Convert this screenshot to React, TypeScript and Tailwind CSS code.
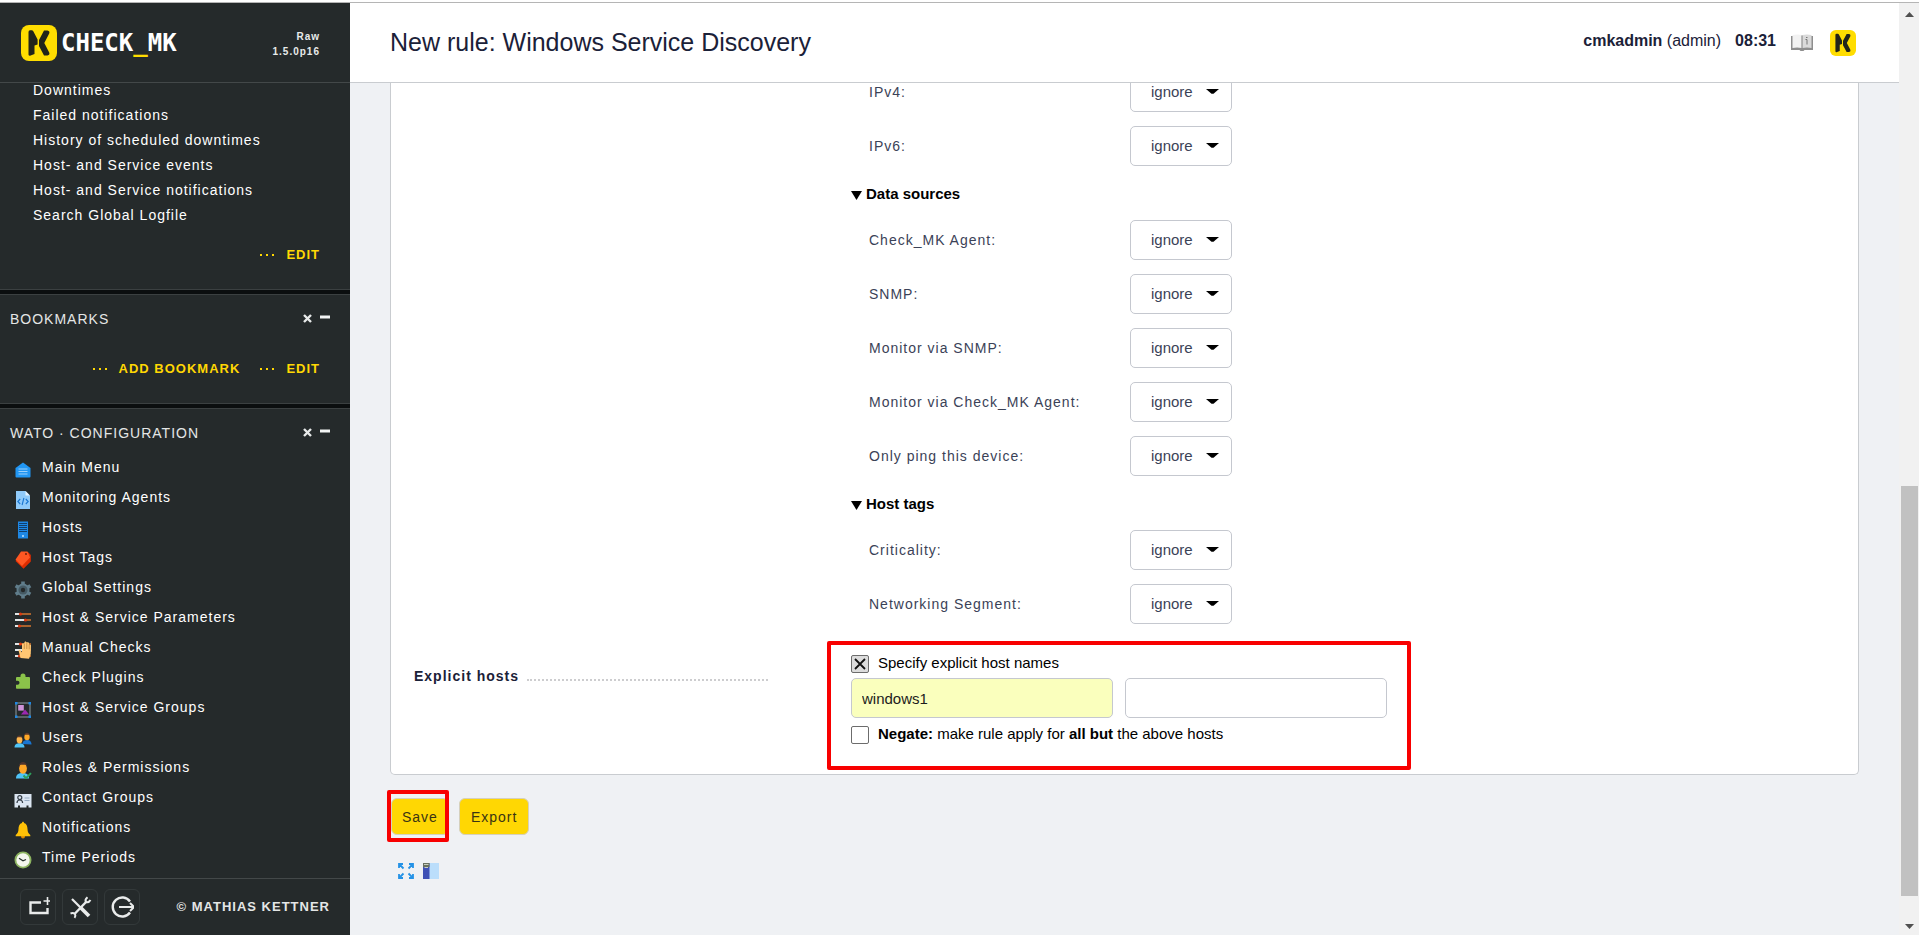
import type { ReactNode } from "react";

const sans = "font-['Liberation_Sans',Arial,sans-serif]";

const views = [
  "Downtimes",
  "Failed notifications",
  "History of scheduled downtimes",
  "Host- and Service events",
  "Host- and Service notifications",
  "Search Global Logfile",
];

const Sliders = () => (
  <g>
    <path d="M1 3h5M1 9h10M1 15h4" stroke="#e0e4e6" strokeWidth="2" />
    <path d="M7 3h10M12 9h5M6 15h11" stroke="#d2762f" strokeWidth="1.6" />
    <circle cx="6.5" cy="3" r="1.6" fill="#dd3a12" />
    <circle cx="11.5" cy="9" r="1.6" fill="#dd3a12" />
    <circle cx="5.5" cy="15" r="1.6" fill="#dd3a12" />
  </g>
);

const menu: { label: string; icon: ReactNode }[] = [
  {
    label: "Main Menu",
    icon: (
      <g>
        <path d="M9 1.5 16.5 7v8.5a1 1 0 0 1-1 1h-13a1 1 0 0 1-1-1V7z" fill="#2196f3" />
        <path d="M4.5 8h9M4.5 10.5h9M4.5 13h9" stroke="#9bd0fb" strokeWidth="1.2" />
      </g>
    ),
  },
  {
    label: "Monitoring Agents",
    icon: (
      <g>
        <path d="M2 0h9.5L16 4.5V18H2z" fill="#90caf9" />
        <path d="M11.500 0 16 4.500h-4.500z" fill="#e6f3fe" />
        <path d="M6.200 8 3.800 10.500l2.400 2.500M11.800 8l2.400 2.500-2.400 2.500M9.900 7l-1.800 7" stroke="#1976d2" strokeWidth="1.1" fill="none" />
      </g>
    ),
  },
  {
    label: "Hosts",
    icon: (
      <g>
        <rect x="4" y="0.500" width="10" height="17" fill="#1e88e5" />
        <path d="M5 2.500h8M5 4.500h8M5 6.500h8M5 8.500h8M5 10.500h8" stroke="#123f6b" strokeWidth="1" />
        <circle cx="9" cy="15" r="1" fill="#bfe3ff" />
      </g>
    ),
  },
  {
    label: "Host Tags",
    icon: (
      <g>
        <path d="M8 1h6L16.800 4v6.500L9.500 17.800 1.500 10z" fill="#dd2c00" />
        <path d="M7 .5h6.500L16 6.500 8 15 1.500 8.500z" fill="#ff5722" />
        <circle cx="12" cy="3" r="0.900" fill="#5c1a08" />
      </g>
    ),
  },
  {
    label: "Global Settings",
    icon: (
      <g>
        <circle cx="9" cy="9" r="6.500" fill="#607d8b" />
        <path d="M9 0.500v17M1.600 4.700l14.800 8.600M1.600 13.300l14.800-8.600" stroke="#607d8b" strokeWidth="3.600" />
        <circle cx="9" cy="9" r="4.600" fill="#455a64" />
        <circle cx="9" cy="9" r="2.200" fill="#252a2b" />
      </g>
    ),
  },
  { label: "Host & Service Parameters", icon: <Sliders /> },
  {
    label: "Manual Checks",
    icon: (
      <g>
        <Sliders />
        <path d="M6.500 17 4.500 9.500 6 8.500l2 3V3l1-1 1.200 1L10.500 1l1 -.8 1 1L13 1.500l1-.6 1 1.200v1.700l1-.3 1 .8-.2 8.700-1.800 4.700z" fill="#ffc773" />
        <path d="M10.300 3v5M12.800 2v6M15.200 3.500v4.800" stroke="#b97b33" strokeWidth=".7" />
      </g>
    ),
  },
  {
    label: "Check Plugins",
    icon: (
      <path
        d="M3 6h3.500V5a2.500 2.500 0 1 1 5 0v1H15a1 1 0 0 1 1 1v10a.8.8 0 0 1-.8.800H2.800A.8.8 0 0 1 2 17v-3.300h1.500a2 2 0 1 0 0-4H2V7a1 1 0 0 1 1-1z"
        fill="#8bc34a"
      />
    ),
  },
  {
    label: "Host & Service Groups",
    icon: (
      <g>
        <rect x="2" y="2" width="14" height="14" fill="none" stroke="#8d9aa0" strokeWidth="1" />
        <path d="M1 1h2.500v2.500H1zM14.500 1H17v2.500h-2.500zM1 14.500h2.500V17H1zM14.500 14.500H17V17h-2.500z" fill="#1e88e5" />
        <rect x="4.200" y="4" width="5.600" height="5.600" fill="#ce93d8" />
        <path d="M7 13.500 11 8.500l4.200 5z" fill="#9c27b0" />
      </g>
    ),
  },
  {
    label: "Users",
    icon: (
      <g>
        <path d="M8.500 13c0-3 2-4 4.500-4s4.500 1.200 4.500 4.500z" fill="#1976d2" />
        <ellipse cx="13" cy="6" rx="2.700" ry="3.200" fill="#ffa726" />
        <path d="M10 5.500c0-5 6-5 6 0l-.8-1.700h-4.400z" fill="#5d3a2c" />
        <path d="M.5 16.500c0-3.300 2-4.300 5-4.300s5 1 5 4.300z" fill="#4fc3f7" />
        <ellipse cx="5.500" cy="8.800" rx="2.900" ry="3.600" fill="#ffb74d" />
        <path d="M2.400 8.300c0-5.200 6.200-5.200 6.200 0l-.9-2H3.300z" fill="#5d3a2c" />
      </g>
    ),
  },
  {
    label: "Roles & Permissions",
    icon: (
      <g>
        <path d="M2 17.500c0-4 2.500-5.500 6.500-5.500s6.500 1.500 6.500 5.500z" fill="#4fc3f7" />
        <ellipse cx="9" cy="7.500" rx="3.900" ry="5.300" fill="#ffa726" />
        <path d="M4.700 7c-.5-8 9-8 8.600 0L12 3.800H6z" fill="#4e342e" />
        <path d="M9.500 14.500l2.500 2.600 5-5" stroke="#2e9e5b" strokeWidth="2" fill="none" />
      </g>
    ),
  },
  {
    label: "Contact Groups",
    icon: (
      <g>
        <path d="M.5 3h17v13.500h-3v-2h-2v2H6v-2H4v2H.5z" fill="#dce6f2" />
        <circle cx="5.800" cy="6.600" r="2" fill="none" stroke="#37404a" strokeWidth="1.200" />
        <path d="M3 12c0-4 5.600-4 5.600 0" fill="none" stroke="#37404a" strokeWidth="1.200" />
        <path d="M10.500 7h5M10.500 9.500h5" stroke="#94a9c0" strokeWidth="1" />
      </g>
    ),
  },
  {
    label: "Notifications",
    icon: (
      <g>
        <circle cx="9" cy="15.500" r="2" fill="#e08b00" />
        <path d="M9 .8c.8 0 1 .6 1 1.200 2.700.8 3.400 3 3.500 6 .1 3 .8 4.500 2.800 6v1.200H1.700V14c2-1.500 2.700-3 2.800-6 .1-3 .8-5.200 3.500-6 0-.6.200-1.200 1-1.200z" fill="#ffc107" />
      </g>
    ),
  },
  {
    label: "Time Periods",
    icon: (
      <g>
        <circle cx="9" cy="9" r="7.600" fill="#f4f6ee" stroke="#8cb360" strokeWidth="1.800" />
        <path d="M5 7.200l4 2.600 3-1.300" stroke="#26302a" strokeWidth="1.200" fill="none" />
      </g>
    ),
  },
];

const MkLogo = ({ className }: { className: string }) => (
  <svg viewBox="0 0 36 36" className={className} aria-hidden="true">
    <rect width="36" height="36" rx="8" fill="#ffdd00" />
    <path d="M7.500 7Q7.500 5.300 9 5.300h1.600q1.200 0 1.700 1L16.600 14.500v5l-3.100 1v8.500L9 30.800Q7.500 30.800 7.500 29.500z" fill="#22241a" />
    <path d="M23 5.500h3.500q2.600.6 1.700 3L23.300 18l4.900 9.500q.9 2.400-1.700 3H23L18 21v-6z" fill="#22241a" />
  </svg>
);

const SnapinHead = ({ title }: { title: string }) => (
  <div className="flex h-12 items-center justify-between border-t border-[#3b4041] pr-5 pl-2.5">
    <h2 className="text-sm tracking-[1px] text-[#e4e6e6]">{title}</h2>
    <div className="flex items-start gap-2">
      <button aria-label={`Remove ${title}`} className="block">
        <svg viewBox="0 0 9 9" className="size-[9px]">
          <path d="M1 1l7 7M8 1L1 8" stroke="#e8eaea" strokeWidth="2.400" />
        </svg>
      </button>
      <button aria-label={`Collapse ${title}`} className="block">
        <svg viewBox="0 0 10 9" className="h-[9px] w-2.5">
          <path d="M0 3h10" stroke="#f2f4f4" strokeWidth="3" />
        </svg>
      </button>
    </div>
  </div>
);

const FootLink = ({ children }: { children: string }) => (
  <a href="#" className="flex items-center gap-3 text-[13px] leading-4 font-bold tracking-[1px] text-[#ffd703]">
    <svg viewBox="0 0 14 2" className="h-0.5 w-3.5" aria-hidden="true">
      <path d="M0 0h2v2H0zM6 0h2v2H6zM12 0h2v2h-2z" fill="#ffd703" />
    </svg>
    {children}
  </a>
);

const FooterButton = ({ label, children }: { label: string; children: ReactNode }) => (
  <button aria-label={label} className="flex size-9 items-center justify-center rounded-md border border-[#33393a]">
    <svg viewBox="0 0 24 24" className="size-6" fill="none" stroke="#e9ebeb" strokeWidth="2">
      {children}
    </svg>
  </button>
);

function Sidebar() {
  return (
    <aside className="flex w-[350px] shrink-0 flex-col bg-[#252a2b] text-white">
      <div className="flex h-20 shrink-0 items-center justify-between border-b border-[#434849] pr-[30px] pl-[21px]">
        <a href="#" className="flex items-center gap-1">
          <MkLogo className="size-9" />
          <span className="font-['DejaVu_Sans_Mono',monospace] text-2xl font-bold">
            CHECK<span className="text-[#ffdd00]">_</span>MK
          </span>
        </a>
        <div className="pt-0.5 text-right text-[10px] leading-[15px] font-bold tracking-[1px] text-[#e8eaea]">
          Raw
          <br />
          1.5.0p16
        </div>
      </div>

      <div className="flex min-h-0 grow flex-col gap-1 overflow-hidden bg-[#0b0e0f]">
        <section className="shrink-0 border-b border-[#3b4041] bg-[#252a2b] pr-[30px] pb-[26px] pl-[33px]">
          <ul className="flex flex-col gap-2.5">
            {views.map((v) => (
              <li key={v} className="text-sm leading-[15px] tracking-[1px]">
                <a href="#">{v}</a>
              </li>
            ))}
          </ul>
          <div className="mt-6 flex justify-end">
            <FootLink>EDIT</FootLink>
          </div>
        </section>

        <section className="shrink-0 border-b border-[#3b4041] bg-[#252a2b]">
          <SnapinHead title="BOOKMARKS" />
          <div className="flex justify-end gap-5 pt-[19px] pr-[30px] pb-[26px]">
            <FootLink>ADD BOOKMARK</FootLink>
            <FootLink>EDIT</FootLink>
          </div>
        </section>

        <section className="grow bg-[#252a2b]">
          <SnapinHead title="WATO · CONFIGURATION" />
          <ul className="-mt-1">
            {menu.map((m) => (
              <li key={m.label}>
                <a href="#" className="flex h-[30px] gap-2.5 pl-3.5 text-sm leading-[30px] tracking-[1px]">
                  <svg viewBox="0 0 18 18" className="mt-[9px] size-[18px]" aria-hidden="true">
                    {m.icon}
                  </svg>
                  {m.label}
                </a>
              </li>
            ))}
          </ul>
        </section>
      </div>

      <footer className="flex h-[57px] shrink-0 items-center justify-between border-t border-[#434849] px-5">
        <div className="flex gap-1.5">
          <FooterButton label="Add snapin">
            <path d="M15 7.500H4.500v10.500h17v-5" strokeWidth="2.400" />
            <path d="M21.500 2v8M17.500 6h8" strokeWidth="1.600" />
          </FooterButton>
          <FooterButton label="Personal settings">
            <path d="M4 4l9 9" strokeWidth="2.200" />
            <path d="M13 13l8 8" strokeWidth="3.800" />
            <path d="M7 18.500L18.500 6.500" strokeWidth="2.400" />
            <path d="M19.500 2.200Q16.500 4.500 18 7q2.500 1.200 4.500-2M2.500 18.500q2.500-1 4.500.5 1 2-.5 3.800" strokeWidth="2" />
          </FooterButton>
          <FooterButton label="Logout">
            <path d="M20 6.500A9.500 9.500 0 1 0 20 17.500" strokeWidth="2.400" />
            <path d="M9 12h15M20 8l4 4-4 4" strokeWidth="2" />
          </FooterButton>
        </div>
        <a href="#" className="text-[13px] font-bold tracking-[1px] text-[#e4e6e6]">
          © MATHIAS KETTNER
        </a>
      </footer>
    </aside>
  );
}

const TagRow = ({ label }: { label: string }) => (
  <label className="flex items-center pl-[18px] text-sm text-[#3b4257]">
    <span className="w-[261px] tracking-[1px]">{label}:</span>
    <span className="relative">
      <select
        className="h-10 w-[102px] appearance-none rounded-[5px] border border-[#c5c8cf] bg-white pl-5 text-[15px] text-[#3b4257]"
        defaultValue="ignore"
      >
        <option>ignore</option>
      </select>
      <svg viewBox="0 0 13 5" className="pointer-events-none absolute top-[17px] right-[13px] h-[5px] w-[13px]" aria-hidden="true">
        <path d="M0 0h13L7.500 4.700h-2z" fill="#000" />
      </svg>
    </span>
  </label>
);

const GroupHead = ({ children }: { children: string }) => (
  <button className="-mb-0.5 flex h-7 items-center gap-1 text-[15px] font-bold text-black">
    <svg viewBox="0 0 11 9" className="mt-0.5 h-[9px] w-[11px]" aria-hidden="true">
      <path d="M0 0h11L5.500 9z" fill="#000" />
    </svg>
    {children}
  </button>
);

function RulePanel() {
  return (
    <div className="rounded-b-[5px] border border-t-0 border-[#c9ccd0] bg-white">
      <div className="grid grid-cols-[460px_1fr]">
        <div />
        <div className="-mt-[11px] flex flex-col gap-3.5">
          <TagRow label="IPv4" />
          <TagRow label="IPv6" />
          <GroupHead>Data sources</GroupHead>
          <TagRow label="Check_MK Agent" />
          <TagRow label="SNMP" />
          <TagRow label="Monitor via SNMP" />
          <TagRow label="Monitor via Check_MK Agent" />
          <TagRow label="Only ping this device" />
          <GroupHead>Host tags</GroupHead>
          <TagRow label="Criticality" />
          <TagRow label="Networking Segment" />
        </div>
      </div>

      <div className="mt-[29px] grid grid-cols-[460px_1fr] pb-7">
        <div className="mt-3.5 mr-[83px] flex h-[18px] items-center gap-2 pl-[23px]">
          <span className="text-sm font-bold tracking-[1px] text-[#1b2138]">Explicit hosts</span>
          <span className="mt-[7px] grow border-b-2 border-dotted border-[#cdcdcf]" />
        </div>
        <div className="relative w-[536px] text-[15px] text-black">
          <label className="flex h-[22px] items-center gap-[9px]">
            <span className="relative flex">
              <input
                type="checkbox"
                defaultChecked
                className="peer size-[18px] appearance-none rounded-[2px] border border-[#6c6c6c] bg-white checked:bg-[#dcdcdc]"
              />
              <svg viewBox="0 0 18 18" className="pointer-events-none absolute inset-0 hidden size-[18px] peer-checked:block" aria-hidden="true">
                <path d="M4 4l10 10M14 4L4 14" stroke="#111" strokeWidth="1.800" />
              </svg>
            </span>
            <span className="pb-0.5">Specify explicit host names</span>
          </label>
          <div className="mt-[3px] flex gap-3">
            <input
              aria-label="Host name 1"
              defaultValue="windows1"
              className="h-10 w-[262px] rounded-[5px] border border-[#c5c8cf] bg-[#faffbd] px-2.5 text-[15px] text-[#1c1c1c]"
            />
            <input
              aria-label="Host name 2"
              defaultValue=""
              className="h-10 w-[262px] rounded-[5px] border border-[#c5c8cf] bg-white px-2.5 text-[15px]"
            />
          </div>
          <label className="mt-1.5 flex h-[22px] items-center gap-[9px]">
            <input
              type="checkbox"
              className="size-[18px] appearance-none rounded-[2px] border border-[#6c6c6c] bg-white checked:bg-[#dcdcdc]"
            />
            <span className="pb-0.5">
              <b>Negate:</b> make rule apply for <b>all but</b> the above hosts
            </span>
          </label>
          <div className="pointer-events-none absolute -inset-x-6 -top-3 -bottom-6 rounded-[2px] border-4 border-[#f80000]" />
        </div>
      </div>
    </div>
  );
}

function Scrollbar() {
  return (
    <div className="flex w-5 shrink-0 flex-col items-center bg-[#f1f1f1]" aria-hidden="true">
      <svg viewBox="0 0 9 5" className="mt-[9px] h-[5px] w-[9px]">
        <path d="M0 5L4.500 0 9 5z" fill="#505050" />
      </svg>
      <div className="grow" />
      <div className="h-[44%] w-[17px] bg-[#c1c1c1]" />
      <svg viewBox="0 0 9 5" className="mt-7 mb-1.5 h-[5px] w-[9px]">
        <path d="M0 0L4.500 5 9 0z" fill="#505050" />
      </svg>
    </div>
  );
}

export default function App() {
  return (
    <div className={`flex h-screen flex-col overflow-hidden bg-white pt-0.5 ${sans}`}>
      <div className="flex min-h-0 grow border-t border-[#b5b5b5]">
        <Sidebar />
        <div className="flex min-w-0 grow flex-col bg-[#eff1f4]">
          <header className="flex h-20 shrink-0 items-center justify-between border-b border-[#c9ccd0] bg-white pr-[43px] pl-10">
            <h1 className="text-[25px] text-[#1b2138]">New rule: Windows Service Discovery</h1>
            <div className="flex items-center text-base text-[#1b2138]">
              <div className="flex gap-3.5 pb-1">
                <span>
                  <b>cmkadmin</b> (admin)
                </span>
                <b>08:31</b>
              </div>
              <a href="#" aria-label="Documentation" className="ml-[15px]">
                <svg viewBox="0 0 22 17" className="h-[17px] w-[22px]">
                  <path d="M0 2h22v14h-8.500l-1 1h-3l-1-1H0z" fill="#8e8e8e" />
                  <path d="M1.500 1Q7 0 10.600 1v13Q6 13 1.500 14z" fill="#f2f2f2" />
                  <path d="M11.400 1Q16 0 20.500 1v13Q16 13 11.400 14z" fill="#dadada" />
                  <path d="M15 3.500h1.500M14.500 5.500H16v5" stroke="#777" strokeWidth="1" fill="none" />
                  <path d="M11 1v13" stroke="#999" strokeWidth=".8" />
                </svg>
              </a>
              <a href="#" aria-label="Check_MK" className="ml-[17px]">
                <MkLogo className="size-[26px]" />
              </a>
            </div>
          </header>

          <main className="min-h-0 grow overflow-hidden px-10">
            <RulePanel />
            <div className="mt-[23px] flex gap-2.5 pl-px">
              <div className="relative">
                <button className="h-[37px] rounded-md border border-[#d5d0bd] bg-[#ffd703] px-2.5 text-sm tracking-[1px] text-[#3a3413]">
                  Save
                </button>
                <div className="pointer-events-none absolute -top-2 right-0 -bottom-[7px] -left-1 rounded-[2px] border-4 border-[#f80000]" />
              </div>
              <button className="h-[37px] rounded-md border border-[#d5d0bd] bg-[#ffd703] px-[11px] text-sm tracking-[1px] text-[#3a3413]">
                Export
              </button>
            </div>
            <div className="mt-7 flex gap-[9px] pl-2">
              <a href="#" aria-label="Full screen">
                <svg viewBox="0 0 16 16" className="size-4" stroke="#2492e6" strokeWidth="1.800" fill="none">
                  <path d="M1 5V1h4M1 1l4.500 4.500M11 1h4v4M15 1l-4.500 4.500M1 11v4h4M1 15l4.500-4.500M11 15h4v-4M15 15l-4.500-4.500" />
                </svg>
              </a>
              <a href="#" aria-label="Toggle sidebar">
                <svg viewBox="0 0 16 16" className="size-4">
                  <rect width="16" height="16" fill="#bbdefb" />
                  <rect width="6.500" height="16" fill="#3f51b5" />
                  <rect width="6.500" height="4" fill="#68705f" />
                  <path d="M1 1.500h4.500M1.500 4.500h3.500" stroke="#c9cfc0" strokeWidth="1" />
                </svg>
              </a>
            </div>
          </main>
        </div>
        <Scrollbar />
      </div>
    </div>
  );
}
